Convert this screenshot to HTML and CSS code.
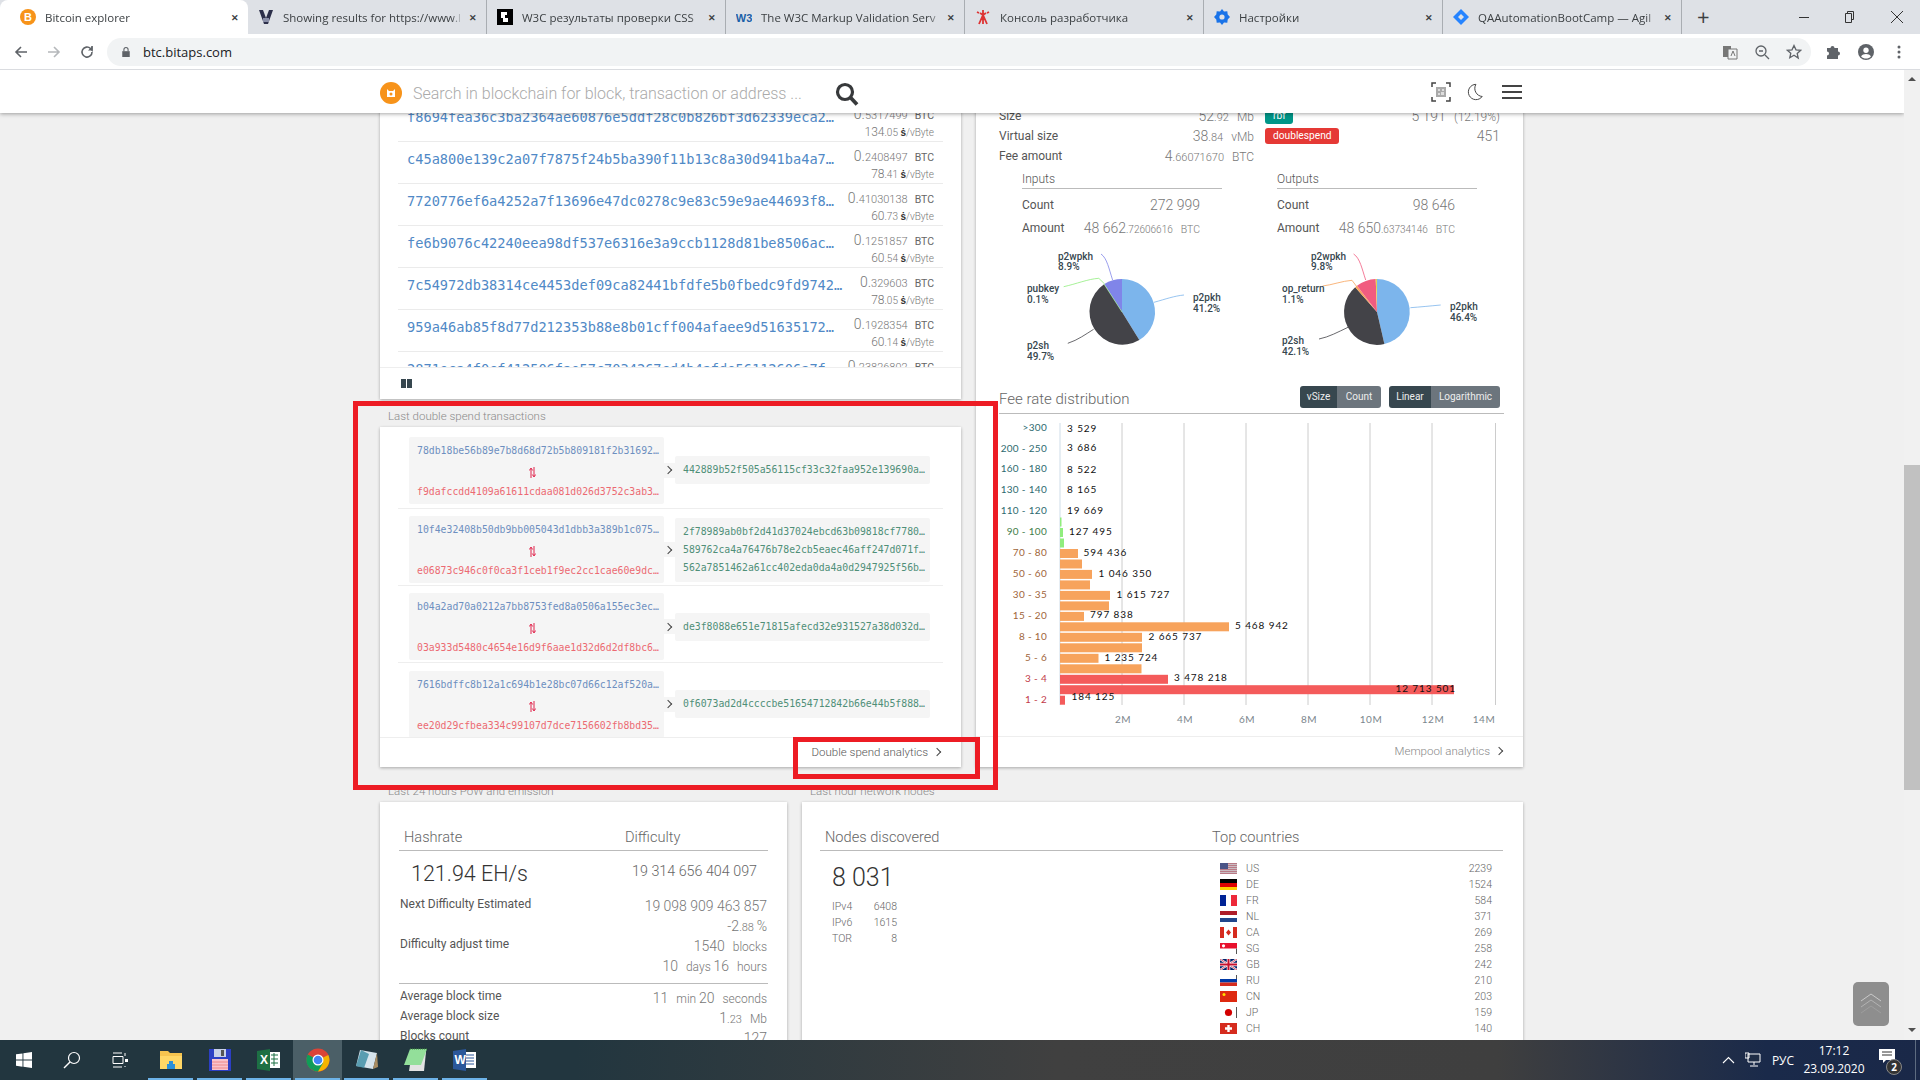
FILE: index.html
```html
<!DOCTYPE html>
<html lang="en">
<head>
    <meta charset="UTF-8">
    <meta name="viewport" content="width=device-width, initial-scale=1.0">
    <title>Bitcoin explorer</title>
    <link rel="stylesheet" href="styles.css">
</head>
<body>
    <!-- browser tabs -->
    <div class="tabs">
        <div class="tab active">
            <svg class="fav" viewBox="0 0 16 16"><circle cx="8" cy="8" r="8" fill="#f7931a"/><text x="8" y="12" class="fav-b">B</text></svg>
            <span class="tab-title">Bitcoin explorer</span><span class="tab-x">✕</span>
        </div>
        <div class="tab">
            <svg class="fav" viewBox="0 0 16 16"><path d="M1 1l4 0 3 8 3-8 4 0-5 14-4 0z" fill="#2c2f4a"/><path d="M5 9h6v4H5z" fill="#8a8fa8"/></svg>
            <span class="tab-title">Showing results for https://www.l</span><span class="tab-x">✕</span>
        </div>
        <div class="tab">
            <svg class="fav" viewBox="0 0 16 16"><path d="M0 0h16v16H0z" fill="#000"/><path d="M4 3h6v3H8v3h3v4H6V9H4z" fill="#fff"/></svg>
            <span class="tab-title">W3C результаты проверки CSS</span><span class="tab-x">✕</span>
        </div>
        <div class="tab">
            <svg class="fav" viewBox="0 0 16 16"><text x="8" y="13" class="fav-w3">W3</text></svg>
            <span class="tab-title">The W3C Markup Validation Serv</span><span class="tab-x">✕</span>
        </div>
        <div class="tab">
            <svg class="fav" viewBox="0 0 16 16"><path d="M8 1v14M4 15l4-9 4 9M5 4l3 2 3-2M2 3l2 1M14 3l-2 1" stroke="#d33" stroke-width="1.8" fill="none"/></svg>
            <span class="tab-title">Консоль разработчика</span><span class="tab-x">✕</span>
        </div>
        <div class="tab">
            <svg class="fav" viewBox="0 0 16 16"><path d="M8 0l2 2.5 3.3-.3.4 3.3L16 8l-2.300 2.500-.4 3.300-3.300-.3L8 16l-2-2.500-3.300.3-.4-3.300L0 8l2.300-2.500.4-3.300 3.300.3z" fill="#1a73e8"/><circle cx="8" cy="8" r="2.600" fill="#dee1e6"/></svg>
            <span class="tab-title">Настройки</span><span class="tab-x">✕</span>
        </div>
        <div class="tab">
            <svg class="fav" viewBox="0 0 16 16"><path d="M8 0l8 8-8 8-8-8z" fill="#2684ff"/><path d="M8 5l3 3-3 3-3-3z" fill="#dee1e6"/></svg>
            <span class="tab-title">QAAutomationBootCamp — Agil</span><span class="tab-x">✕</span>
        </div>
        <span class="new-tab">+</span>
        <div class="win-ctrl">
            <svg width="12" height="12" viewBox="0 0 12 12"><path d="M1 6.500h10" stroke="#333"/></svg>
            <svg width="12" height="12" viewBox="0 0 12 12"><path d="M3.500 2.500v-2h6v8h-2M1.500 2.500h6v9h-6z" stroke="#333" fill="none"/></svg>
            <svg width="14" height="14" viewBox="0 0 14 14"><path d="M1 1l12 12M13 1L1 13" stroke="#333"/></svg>
        </div>
    </div>

    <!-- address bar -->
    <div class="toolbar">
        <svg class="tool" viewBox="0 0 16 16"><path d="M14 8H3M8 3L3 8l5 5" stroke="#5f6368" stroke-width="1.600" fill="none"/></svg>
        <svg class="tool" viewBox="0 0 16 16"><path d="M2 8h11M8 3l5 5-5 5" stroke="#b5b8bb" stroke-width="1.600" fill="none"/></svg>
        <svg class="tool" viewBox="0 0 16 16"><path d="M13 8a5 5 0 1 1-1.500-3.500L13 6V2" stroke="#5f6368" stroke-width="1.600" fill="none"/><path d="M13.500 2v4.500H9z" fill="#5f6368"/></svg>
        <div class="omnibox">
            <svg class="lock" viewBox="0 0 12 14"><path d="M1.500 6h9v7h-9z" fill="#5f6368"/><path d="M3.500 6V4a2.500 2.500 0 0 1 5 0v2" stroke="#5f6368" stroke-width="1.300" fill="none"/></svg>
            <span class="url">btc.bitaps.com</span>
            <svg class="omni-icon" viewBox="0 0 16 16"><path d="M1 2h8v11H1z" fill="#777"/><path d="M6 5h9v10H6z" fill="#f1f3f4" stroke="#777"/><path d="M9 12l2-5 2 5" stroke="#777" fill="none"/></svg>
            <svg class="omni-icon" viewBox="0 0 16 16"><circle cx="7" cy="7" r="5" stroke="#5f6368" stroke-width="1.300" fill="none"/><path d="M11 11l4 4M5 7h4" stroke="#5f6368" stroke-width="1.300"/></svg>
            <svg class="omni-icon" viewBox="0 0 16 16"><path d="M8 1.500l2 4.300 4.700.5-3.500 3.200 1 4.600L8 11.300l-4.200 2.500 1-4.600L1.300 6.300 6 5.800z" stroke="#5f6368" stroke-width="1.300" fill="none"/></svg>
        </div>
        <svg class="tool ext" viewBox="0 0 16 16"><path d="M2 4h3.500a2 2 0 0 1 4 0H13v3.500a2 2 0 0 1 0 4V15H2v-3.500a2 2 0 0 0 0-4z" fill="#5f6368"/></svg>
        <svg class="tool" viewBox="0 0 18 18"><circle cx="9" cy="9" r="9" fill="#5f6368"/><circle cx="9" cy="7" r="3" fill="#fff"/><path d="M3.500 14c2-3.500 9-3.500 11 0-3 3-8 3-11 0z" fill="#fff"/></svg>
        <svg class="tool" viewBox="0 0 16 16"><circle cx="8" cy="3" r="1.500" fill="#5f6368"/><circle cx="8" cy="8" r="1.500" fill="#5f6368"/><circle cx="8" cy="13" r="1.500" fill="#5f6368"/></svg>
    </div>

    <div class="view">
        <div class="viewport">
            <!-- site header sits over the scrolled page -->
            <header class="site-head">
                <div class="search">
                    <svg class="logo" viewBox="0 0 22 22"><circle cx="11" cy="11" r="11" fill="#f7931a"/><path d="M7 7l2 2h4l2-2v8H7z" fill="#fff"/><circle cx="11" cy="12" r="1.500" fill="#f7931a"/></svg>
                    <span class="placeholder">Search in blockchain for block, transaction or address ...</span>
                    <svg class="search-icon" viewBox="0 0 24 24"><circle cx="10" cy="10" r="7.500" stroke="#37393b" stroke-width="3.200" fill="none"/><path d="M15.500 15.500L22 22.500" stroke="#37393b" stroke-width="3.800"/></svg>
                </div>
                <div class="head-icons">
                    <svg class="qr" viewBox="0 0 20 20"><path d="M1 5V1h4M15 1h4v4M19 15v4h-4M5 19H1v-4" stroke="#444" stroke-width="1.500" fill="none"/><path d="M5 5h10v10H5z" fill="#aaa"/><path d="M7 7h2v2H7zM11 7h2v2h-2zM7 11h2v2H7zM10 10h3v3h-3z" fill="#ddd"/></svg>
                    <svg class="moon" viewBox="0 0 20 20"><path d="M11 1.500A8.500 8.500 0 1 0 18 15 9 9 0 0 1 11 1.500z" stroke="#444" stroke-width="1.100" fill="none"/></svg>
                    <div class="burger"><i></i><i></i><i></i></div>
                </div>
            </header>

            <main class="page">
                <div class="top-grid">
                    <div class="left-col">
                        <section class="card tx-card">
                            <div class="tx-list">
                                <div class="tx-row">
                                    <a class="tx-hash">f8694fea36c3ba2364ae60876e5ddf28c0b826bf3d62339eca2…</a>
                                    <div class="tx-amount">
                                        <div><b>0.</b>5317499<span class="unit">BTC</span></div>
                                        <div class="fee"><b>134</b>.05 <i>ṡ</i>/vByte</div>
                                    </div>
                                </div>
                                <div class="tx-row">
                                    <a class="tx-hash">c45a800e139c2a07f7875f24b5ba390f11b13c8a30d941ba4a7…</a>
                                    <div class="tx-amount">
                                        <div><b>0.</b>2408497<span class="unit">BTC</span></div>
                                        <div class="fee"><b>78</b>.41 <i>ṡ</i>/vByte</div>
                                    </div>
                                </div>
                                <div class="tx-row">
                                    <a class="tx-hash">7720776ef6a4252a7f13696e47dc0278c9e83c59e9ae44693f8…</a>
                                    <div class="tx-amount">
                                        <div><b>0.</b>41030138<span class="unit">BTC</span></div>
                                        <div class="fee"><b>60</b>.73 <i>ṡ</i>/vByte</div>
                                    </div>
                                </div>
                                <div class="tx-row">
                                    <a class="tx-hash">fe6b9076c42240eea98df537e6316e3a9ccb1128d81be8506ac…</a>
                                    <div class="tx-amount">
                                        <div><b>0.</b>1251857<span class="unit">BTC</span></div>
                                        <div class="fee"><b>60</b>.54 <i>ṡ</i>/vByte</div>
                                    </div>
                                </div>
                                <div class="tx-row">
                                    <a class="tx-hash">7c54972db38314ce4453def09ca82441bfdfe5b0fbedc9fd9742…</a>
                                    <div class="tx-amount">
                                        <div><b>0.</b>329603<span class="unit">BTC</span></div>
                                        <div class="fee"><b>78</b>.05 <i>ṡ</i>/vByte</div>
                                    </div>
                                </div>
                                <div class="tx-row">
                                    <a class="tx-hash">959a46ab85f8d77d212353b88e8b01cff004afaee9d51635172…</a>
                                    <div class="tx-amount">
                                        <div><b>0.</b>1928354<span class="unit">BTC</span></div>
                                        <div class="fee"><b>60</b>.14 <i>ṡ</i>/vByte</div>
                                    </div>
                                </div>
                                <div class="tx-row">
                                    <a class="tx-hash">2871eca4f0cf412506fae57c7034267cd4b4afde56112606a7f</a>
                                    <div class="tx-amount">
                                        <div><b>0.</b>23826892<span class="unit">BTC</span></div>
                                        <div class="fee"><b>60</b>.11 <i>ṡ</i>/vByte</div>
                                    </div>
                                </div>
                            </div>
                            <div class="tx-foot"><span class="pause"><i></i><i></i></span></div>
                        </section>

                        <div class="section-label">Last double spend transactions</div>
                        <section class="card ds-card">
                            <div class="ds-row">
                                <div class="ds-in">
                                    <div class="h-blue">78db18be56b89e7b8d68d72b5b809181f2b31692…</div>
                                    <svg class="swap" viewBox="0 0 7 11"><path d="M2 11V2M.3 3.500L2 1l1.700 2.500M5 0v9M3.300 7.500L5 10l1.700-2.500" stroke="#e0224a" fill="none"/></svg>
                                    <div class="h-red">f9dafccdd4109a61611cdaa081d026d3752c3ab3…</div>
                                </div>
                                <div class="ds-chev"><span class="chev"></span></div>
                                <div class="ds-out">
                                    <div class="h-green">442889b52f505a56115cf33c32faa952e139690a…</div>
                                </div>
                            </div>
                            <div class="ds-row">
                                <div class="ds-in">
                                    <div class="h-blue">10f4e32408b50db9bb005043d1dbb3a389b1c075…</div>
                                    <svg class="swap" viewBox="0 0 7 11"><path d="M2 11V2M.3 3.500L2 1l1.700 2.500M5 0v9M3.300 7.500L5 10l1.700-2.500" stroke="#e0224a" fill="none"/></svg>
                                    <div class="h-red">e06873c946c0f0ca3f1ceb1f9ec2cc1cae60e9dc…</div>
                                </div>
                                <div class="ds-chev"><span class="chev"></span></div>
                                <div class="ds-out">
                                    <div class="h-green">2f78989ab0bf2d41d37024ebcd63b09818cf7780…</div>
                                    <div class="h-green">589762ca4a76476b78e2cb5eaec46aff247d071f…</div>
                                    <div class="h-green">562a7851462a61cc402eda0da4a0d2947925f56b…</div>
                                </div>
                            </div>
                            <div class="ds-row">
                                <div class="ds-in">
                                    <div class="h-blue">b04a2ad70a0212a7bb8753fed8a0506a155ec3ec…</div>
                                    <svg class="swap" viewBox="0 0 7 11"><path d="M2 11V2M.3 3.500L2 1l1.700 2.500M5 0v9M3.300 7.500L5 10l1.700-2.500" stroke="#e0224a" fill="none"/></svg>
                                    <div class="h-red">03a933d5480c4654e16d9f6aae1d32d6d2df8bc6…</div>
                                </div>
                                <div class="ds-chev"><span class="chev"></span></div>
                                <div class="ds-out">
                                    <div class="h-green">de3f8088e651e71815afecd32e931527a38d032d…</div>
                                </div>
                            </div>
                            <div class="ds-row">
                                <div class="ds-in">
                                    <div class="h-blue">7616bdffc8b12a1c694b1e28bc07d66c12af520a…</div>
                                    <svg class="swap" viewBox="0 0 7 11"><path d="M2 11V2M.3 3.500L2 1l1.700 2.500M5 0v9M3.300 7.500L5 10l1.700-2.500" stroke="#e0224a" fill="none"/></svg>
                                    <div class="h-red">ee20d29cfbea334c99107d7dce7156602fb8bd35…</div>
                                </div>
                                <div class="ds-chev"><span class="chev"></span></div>
                                <div class="ds-out">
                                    <div class="h-green">0f6073ad2d4ccccbe51654712842b66e44b5f888…</div>
                                </div>
                            </div>
                            <div class="card-foot"><a>Double spend analytics</a><span class="chev"></span></div>
                        </section>
                    </div>

                    <section class="card mempool-card">
                        <div class="mp-summary">
                            <div class="mp-col">
                                <div class="mp-row"><span>Size</span><span class="val"><b>52</b>.92<small>Mb</small></span></div>
                                <div class="mp-row"><span>Virtual size</span><span class="val"><b>38</b>.84<small>vMb</small></span></div>
                                <div class="mp-row"><span>Fee amount</span><span class="val"><b>4</b>.66071670<small>BTC</small></span></div>
                            </div>
                            <div class="mp-col right">
                                <div class="mp-row"><span class="badge teal">rbf</span><span class="val"><b>5 191</b><small>(12.19%)</small></span></div>
                                <div class="mp-row"><span class="badge red">doublespend</span><span class="val"><b>451</b></span></div>
                            </div>
                        </div>

                        <div class="io-grid">
                            <div class="io-col">
                                <div class="io-head">Inputs</div>
                                <div class="io-row"><span>Count</span><span class="val"><b>272 999</b></span></div>
                                <div class="io-row"><span>Amount</span><span class="val"><b>48 662</b>.72606616<small>BTC</small></span></div>
                            </div>
                            <div class="io-col">
                                <div class="io-head">Outputs</div>
                                <div class="io-row"><span>Count</span><span class="val"><b>98 646</b></span></div>
                                <div class="io-row"><span>Amount</span><span class="val"><b>48 650</b>.63734146<small>BTC</small></span></div>
                            </div>
                        </div>

                        <svg class="pies" viewBox="0 1 547 135">
                            <!-- inputs -->
                            <path d="M146 76L146 43A33 33 0 0 1 163.300 104.100Z" fill="#7cb5ec"/>
                            <path d="M146 76L163.300 104.100A33 33 0 0 1 128.100 48.300Z" fill="#434348"/>
                            <path d="M146 76L128.300 48.100A33 33 0 0 1 146 43Z" fill="#8085e9"/>
                            <path d="M146 76L128.100 48.300" stroke="#90ed7d" stroke-width=".6"/>
                            <path d="M178 66.300C190 63 198 60 208 59" class="lead" stroke="#7cb5ec"/>
                            <path d="M91.800 107.300C102 104 110 98 117.600 93.300" class="lead" stroke="#434348"/>
                            <path d="M87.700 50.700C100 48 112 43 122.800 42.300L128.700 48" class="lead" stroke="#90ed7d"/>
                            <path d="M125 18C131 22 133 33 136.600 44" class="lead" stroke="#8085e9"/>
                            <text class="pie-label" x="217" y="61">p2pkh</text><text class="pie-label" x="217" y="72">41.2%</text>
                            <text class="pie-label" x="82" y="20">p2wpkh</text><text class="pie-label" x="82" y="30">8.9%</text>
                            <text class="pie-label" x="51" y="52">pubkey</text><text class="pie-label" x="51" y="63">0.1%</text>
                            <text class="pie-label" x="51" y="109">p2sh</text><text class="pie-label" x="51" y="120">49.7%</text>
                            <!-- outputs -->
                            <path d="M401 76L401 43A33 33 0 0 1 408.400 108.100Z" fill="#7cb5ec"/>
                            <path d="M401 76L408.400 108.100A33 33 0 0 1 379.200 51.200Z" fill="#434348"/>
                            <path d="M401 76L379.200 51.200A33 33 0 0 1 381 49.800Z" fill="#f7a35c"/>
                            <path d="M401 76L381 49.800A33 33 0 0 1 399.700 43Z" fill="#f15c80"/>
                            <path d="M401 76L399.700 43A33 33 0 0 1 401 43Z" fill="#e4d354"/>
                            <path d="M434.400 71.700C444 71 454 70 464.700 69" class="lead" stroke="#7cb5ec"/>
                            <path d="M343 103C353 101 362 96 372 91.300" class="lead" stroke="#434348"/>
                            <path d="M346.600 50C356 49 366 45 376 44.300L381 51" class="lead" stroke="#f7a35c"/>
                            <path d="M377.600 18C384 22 386 33 389.700 44" class="lead" stroke="#f15c80"/>
                            <text class="pie-label" x="474" y="70">p2pkh</text><text class="pie-label" x="474" y="81">46.4%</text>
                            <text class="pie-label" x="335" y="20">p2wpkh</text><text class="pie-label" x="335" y="30">9.8%</text>
                            <text class="pie-label" x="306" y="52">op_return</text><text class="pie-label" x="306" y="63">1.1%</text>
                            <text class="pie-label" x="306" y="104">p2sh</text><text class="pie-label" x="306" y="115">42.1%</text>
                        </svg>

                        <div class="fee-head">
                            <span class="fee-title">Fee rate distribution</span>
                            <div class="btn-group"><span class="btn on vsize">vSize</span><span class="btn count">Count</span></div>
                            <div class="btn-group"><span class="btn on linear">Linear</span><span class="btn log">Logarithmic</span></div>
                        </div>

                        <svg class="chart" viewBox="0 0 547 316">
                            <g class="grid">
                                <path d="M146 7V289M208 7V289M270 7V289M332 7V289M394 7V289M456 7V289M519.500 7V289"/>
                            </g>
                            <path d="M84 7V289" stroke="#cfdde8"/>
                            <g class="bars-green">
                                <rect x="84" y="101.500" width="1.500" height="9"/>
                                <rect x="84" y="112" width="3" height="9"/>
                                <rect x="84" y="122.500" width="4" height="9"/>
                            </g>
                            <g class="bars-orange">
                                <rect x="84" y="133" width="18" height="9"/>
                                <rect x="84" y="143.500" width="22" height="9"/>
                                <rect x="84" y="153.900" width="32" height="9"/>
                                <rect x="84" y="164.400" width="30" height="9"/>
                                <rect x="84" y="174.900" width="50" height="9"/>
                                <rect x="84" y="185.400" width="49" height="9"/>
                                <rect x="84" y="195.900" width="24" height="9"/>
                                <rect x="84" y="206.300" width="169" height="9"/>
                                <rect x="84" y="216.800" width="82" height="9"/>
                                <rect x="84" y="227.300" width="82" height="9"/>
                                <rect x="84" y="237.800" width="38.500" height="9"/>
                                <rect x="84" y="248.300" width="81.500" height="9"/>
                            </g>
                            <g class="bars-red">
                                <rect x="84" y="258.800" width="108" height="9"/>
                                <rect x="84" y="269.200" width="394" height="9"/>
                                <rect x="84" y="279.700" width="5" height="9"/>
                            </g>
                            <g class="range" transform="translate(0 -1)">
                                <text x="71" y="12" fill="#2d6a6f">&gt;300</text>
                                <text x="71" y="33" fill="#2d6a6f">200 - 250</text>
                                <text x="71" y="53" fill="#2d6a6f">160 - 180</text>
                                <text x="71" y="74" fill="#2d6a6f">130 - 140</text>
                                <text x="71" y="95" fill="#2d6a6f">110 - 120</text>
                                <text x="71" y="116" fill="#3f7d4a">90 - 100</text>
                                <text x="71" y="137" fill="#a0653a">70 - 80</text>
                                <text x="71" y="158" fill="#a0653a">50 - 60</text>
                                <text x="71" y="179" fill="#a0653a">30 - 35</text>
                                <text x="71" y="200" fill="#a0653a">15 - 20</text>
                                <text x="71" y="221" fill="#a0653a">8 - 10</text>
                                <text x="71" y="242" fill="#a0653a">5 - 6</text>
                                <text x="71" y="263" fill="#c23a4a">3 - 4</text>
                                <text x="71" y="284" fill="#c23a4a">1 - 2</text>
                            </g>
                            <g class="values" transform="translate(0 -1)">
                                <text x="91" y="12.500">3 529</text>
                                <text x="91" y="32">3 686</text>
                                <text x="91" y="53.500">8 522</text>
                                <text x="91" y="74">8 165</text>
                                <text x="91" y="95">19 669</text>
                                <text x="93" y="116">127 495</text>
                                <text x="107.500" y="137">594 436</text>
                                <text x="122.500" y="158">1 046 350</text>
                                <text x="140.500" y="179">1 615 727</text>
                                <text x="114" y="199">797 838</text>
                                <text x="259" y="210">5 468 942</text>
                                <text x="172.500" y="221">2 665 737</text>
                                <text x="128.500" y="242">1 235 724</text>
                                <text x="198" y="262">3 478 218</text>
                                <text x="419.500" y="273">12 713 501</text>
                                <text x="95.500" y="281">184 125</text>
                            </g>
                            <g class="axis">
                                <text x="147" y="303">2M</text>
                                <text x="209" y="303">4M</text>
                                <text x="271" y="303">6M</text>
                                <text x="333" y="303">8M</text>
                                <text x="395" y="303">10M</text>
                                <text x="457" y="303">12M</text>
                                <text x="508" y="303">14M</text>
                            </g>
                        </svg>
                        <div class="card-foot muted"><a>Mempool analytics</a><span class="chev"></span></div>
                    </section>
                </div>

                <div class="bottom-grid">
                    <div class="pow-col">
                        <div class="section-label">Last 24 hours PoW and emission</div>
                        <section class="card pow-card">
                            <div class="title-row">
                                <span class="title pow-t1">Hashrate</span>
                                <span class="title">Difficulty</span>
                            </div>
                            <div class="pow-top">
                                <span class="hashrate">121.94 EH/s</span>
                                <span class="difficulty">19 314 656 404 097</span>
                            </div>
                            <div class="stat"><span>Next Difficulty Estimated</span><span class="val"><b>19 098 909 463 857</b></span></div>
                            <div class="stat"><span></span><span class="val"><b>-2</b>.88 <b>%</b></span></div>
                            <div class="stat"><span>Difficulty adjust time</span><span class="val"><b>1540</b><small>blocks</small></span></div>
                            <div class="stat"><span></span><span class="val"><b>10</b><small>days</small> <b>16</b><small>hours</small></span></div>
                            <div class="pow-sep"></div>
                            <div class="stat"><span>Average block time</span><span class="val"><b>11</b><small>min</small> <b>20</b><small>seconds</small></span></div>
                            <div class="stat"><span>Average block size</span><span class="val"><b>1</b>.23<small>Mb</small></span></div>
                            <div class="stat"><span>Blocks count</span><span class="val"><b>127</b></span></div>
                        </section>
                    </div>
                    <div class="nodes-col">
                        <div class="section-label">Last hour network nodes</div>
                        <section class="card nodes-card">
                            <div class="title-row">
                                <span class="title nodes-t1">Nodes discovered</span>
                                <span class="title">Top countries</span>
                            </div>
                            <div class="nodes-body">
                                <div class="nodes-left">
                                    <div class="nodes-total">8 031</div>
                                    <div class="node-kind"><span>IPv4</span><span>6408</span></div>
                                    <div class="node-kind"><span>IPv6</span><span>1615</span></div>
                                    <div class="node-kind"><span>TOR</span><span>8</span></div>
                                </div>
                                <div class="countries">
                                    <div class="country">
                                        <svg class="flag" viewBox="0 0 17 11"><path d="M0 0h17v11H0z" fill="#c9bcc2"/><path d="M0 0h17v1H0zM0 2h17v1H0zM0 4h17v1H0zM0 6h17v1H0zM0 8h17v1H0zM0 10h17v1H0z" fill="#b97a86"/><path d="M0 0h8v6H0z" fill="#4a5487"/></svg>
                                        <span class="code">US</span><span>2239</span>
                                    </div>
                                    <div class="country">
                                        <svg class="flag" viewBox="0 0 17 11"><path d="M0 0h17v4H0z" fill="#000"/><path d="M0 4h17v4H0z" fill="#d00"/><path d="M0 8h17v3H0z" fill="#fc0"/></svg>
                                        <span class="code">DE</span><span>1524</span>
                                    </div>
                                    <div class="country">
                                        <svg class="flag" viewBox="0 0 17 11"><path d="M0 0h6v11H0z" fill="#002395"/><path d="M6 0h5v11H6z" fill="#fff"/><path d="M11 0h6v11h-6z" fill="#ed2939"/></svg>
                                        <span class="code">FR</span><span>584</span>
                                    </div>
                                    <div class="country">
                                        <svg class="flag" viewBox="0 0 17 11"><path d="M0 0h17v4H0z" fill="#ae1c28"/><path d="M0 4h17v3H0z" fill="#fff"/><path d="M0 7h17v4H0z" fill="#21468b"/></svg>
                                        <span class="code">NL</span><span>371</span>
                                    </div>
                                    <div class="country">
                                        <svg class="flag" viewBox="0 0 17 11"><path d="M0 0h4v11H0zM13 0h4v11h-4z" fill="#d52b1e"/><path d="M8.500 2.500l2.500 3-2.500 3-2.500-3z" fill="#d52b1e"/></svg>
                                        <span class="code">CA</span><span>269</span>
                                    </div>
                                    <div class="country">
                                        <svg class="flag" viewBox="0 0 17 11"><path d="M0 0h17v5.500H0z" fill="#e8112d"/><circle cx="3.500" cy="2.800" r="1.600" fill="#fff"/><path d="M16.500 5.500V11" stroke="#555"/></svg>
                                        <span class="code">SG</span><span>258</span>
                                    </div>
                                    <div class="country">
                                        <svg class="flag" viewBox="0 0 17 11"><path d="M0 0h17v11H0z" fill="#012169"/><path d="M0 0l17 11M17 0L0 11" stroke="#fff" stroke-width="2"/><path d="M0 0l17 11M17 0L0 11" stroke="#c8102e" stroke-width=".7"/><path d="M8.500 0v11M0 5.500h17" stroke="#fff" stroke-width="3.500"/><path d="M8.500 0v11M0 5.500h17" stroke="#c8102e" stroke-width="2"/></svg>
                                        <span class="code">GB</span><span>242</span>
                                    </div>
                                    <div class="country">
                                        <svg class="flag" viewBox="0 0 17 11"><path d="M0 0h17v4H0z" fill="#fff"/><path d="M0 4h17v3.500H0z" fill="#0039a6"/><path d="M0 7.500h17V11H0z" fill="#d52b1e"/><path d="M16.500 0v4" stroke="#555"/></svg>
                                        <span class="code">RU</span><span>210</span>
                                    </div>
                                    <div class="country">
                                        <svg class="flag" viewBox="0 0 17 11"><path d="M0 0h17v11H0z" fill="#de2910"/><circle cx="4" cy="3.500" r="1.500" fill="#ffde00"/></svg>
                                        <span class="code">CN</span><span>203</span>
                                    </div>
                                    <div class="country">
                                        <svg class="flag" viewBox="0 0 17 11"><circle cx="8.500" cy="5.500" r="3.600" fill="#d30000"/><path d="M16.500 0v11" stroke="#555"/></svg>
                                        <span class="code">JP</span><span>159</span>
                                    </div>
                                    <div class="country">
                                        <svg class="flag" viewBox="0 0 17 11"><path d="M0 0h17v11H0z" fill="#d52b1e"/><path d="M7.300 2h2.400v2.300H12v2.400H9.700V9H7.300V6.700H5V4.300h2.300z" fill="#fff"/></svg>
                                        <span class="code">CH</span><span>140</span>
                                    </div>
                                </div>
                            </div>
                        </section>
                    </div>
                </div>
            </main>

            <!-- back to top button -->
            <div class="to-top">
                <svg viewBox="0 0 24 22"><path d="M2 8l10-7 10 7" stroke="#c9c9c9" fill="none"/><path d="M2 14l10-7 10 7" stroke="#b2b2b2" fill="none"/><path d="M2 20l10-7 10 7" stroke="#9e9e9e" fill="none"/></svg>
            </div>
        </div>

        <div class="scrollbar">
            <span class="arrow up"></span>
            <div class="thumb"></div>
            <span class="arrow down"></span>
        </div>

        <!-- red annotation frames drawn on top of the screenshot -->
        <div class="mark mark-outer"></div>
        <div class="mark mark-inner"></div>
    </div>

    <!-- windows taskbar -->
    <footer class="taskbar">
        <div class="task-btn"><svg width="16" height="16" viewBox="0 0 16 16"><path d="M0 2.300l6.500-.9v6.200H0zM7.400 1.300L16 0v7.600H7.400zM0 8.500h6.500v6.200L0 13.800zM7.400 8.500H16V16l-8.600-1.200z" fill="#fff"/></svg></div>
        <div class="task-btn"><svg width="18" height="18" viewBox="0 0 18 18"><circle cx="11" cy="7" r="5.500" stroke="#fff" stroke-width="1.200" fill="none"/><path d="M7 11l-6 6" stroke="#fff" stroke-width="1.400"/></svg></div>
        <div class="task-btn"><svg width="16" height="16" viewBox="0 0 16 16"><path d="M1 4.500h10v7H1zM1 1h9M1 15h9M13 1v3M13 14v1" stroke="#fff" fill="none"/><path d="M13 7h3v3h-3z" fill="#fff"/></svg></div>
        <div class="task-btn pinned gap"><svg width="22" height="18" viewBox="0 0 22 18"><path d="M0 0h8l2 2h12v16H0z" fill="#f6c44f"/><path d="M0 5h22v13H0z" fill="#ffd766"/><path d="M7 18v-5h2v-3h4v3h2v5z" fill="#2b90d9"/></svg></div>
        <div class="task-btn pinned"><svg width="24" height="24" viewBox="0 0 24 24"><path d="M1 1h22v22H1z" fill="#2c3fc4"/><path d="M6 1h12v8H6z" fill="#c8d0e8"/><path d="M13 2h3v6h-3z" fill="#555"/><path d="M4 11h16v11H4z" fill="#f9c3cc"/><path d="M4 14h16M4 17h16M4 20h16" stroke="#e88"/></svg></div>
        <div class="task-btn pinned"><svg width="23" height="22" viewBox="0 0 23 22"><path d="M12 3h11v16H12z" fill="#fff"/><path d="M14 6h7M14 10h7M14 14h7M17 4v13" stroke="#1d7044"/><path d="M0 2l13-2v22L0 20z" fill="#1d7044"/><text x="3" y="15" class="tb-letter">X</text></svg></div>
        <div class="task-btn pinned active"><svg width="24" height="24" viewBox="0 0 24 24"><circle cx="12" cy="12" r="11.500" fill="#db4437"/><path d="M12 12L22.300 7A11.500 11.500 0 0 1 12 23.500z" fill="#f4b400"/><path d="M12 12L6.300 22A11.500 11.500 0 0 1 1.700 6.500z" fill="#0f9d58"/><path d="M12 23.500A11.500 11.500 0 0 1 6.300 22L12 12l5 3z" fill="#0f9d58"/><circle cx="12" cy="12" r="5.500" fill="#fff"/><circle cx="12" cy="12" r="4.300" fill="#4285f4"/></svg></div>
        <div class="task-btn pinned"><svg width="24" height="22" viewBox="0 0 24 22"><path d="M5 1l17 3-4 16L1 17z" fill="#d6e4ec"/><path d="M6 1l-5 16 8 2 5-14z" fill="#3a8ba3" opacity=".8"/><path d="M22 4l1 14-5 2z" fill="#a98d62"/></svg></div>
        <div class="task-btn pinned"><svg width="24" height="24" viewBox="0 0 24 24"><path d="M8 4h14l-2 19H5z" fill="#e3e3e3"/><path d="M6 1h17l-6 16H0z" fill="#93df9a"/><path d="M6 1h17" stroke="#3c8a3e" stroke-dasharray="1 1"/></svg></div>
        <div class="task-btn pinned"><svg width="23" height="22" viewBox="0 0 23 22"><path d="M10 3h13v16H10z" fill="#fff"/><path d="M13 6h8M13 9h8M13 12h8M13 15h8" stroke="#2b579a"/><path d="M0 2l13-2v22L0 20z" fill="#2b579a"/><text x="1.500" y="15" class="tb-letter">W</text></svg></div>
        <div class="tray">
            <svg width="13" height="8" viewBox="0 0 13 8"><path d="M1 7l5.500-5.500L12 7" stroke="#fff" stroke-width="1.100" fill="none"/></svg>
            <svg class="net" width="16" height="16" viewBox="0 0 16 16"><path d="M3 2h12v8H3zM9 10v3M5 14h8M0 1h4v5H0z" stroke="#fff" fill="#1f2d46"/></svg>
            <span class="lang">РУС</span>
            <div class="clock"><div>17:12</div><div>23.09.2020</div></div>
            <div class="notify">
                <svg width="17" height="16" viewBox="0 0 17 16"><path d="M0 0h16v11H7l-3 3v-3H0z" fill="#fff"/><path d="M3 3h10M3 6h10" stroke="#333"/></svg>
                <span class="notify-count">2</span>
            </div>
            <span class="show-desktop"></span>
        </div>
    </footer>
</body>
</html>
```
FILE: styles.css
```css
* {
    box-sizing: border-box;
}

html, body {
    height: 100%;
    margin: 0;
    overflow: hidden;
}

body {
    display: flex;
    flex-direction: column;
    font-family: Roboto, Arial, sans-serif;
    background: #f0f0f0;
    color: #555;
}

/* browser chrome */
.tabs {
    height: 34px;
    background: #dee1e6;
    display: flex;
    padding-left: 8px;
    font-family: "Open Sans", Arial, sans-serif;
    font-size: 11.5px;
    color: #3c4043;
    flex-shrink: 0;
}

.tab {
    width: 239px;
    height: 34px;
    display: flex;
    align-items: center;
    padding: 0 9px 0 10px;
    position: relative;
    border-right: 1px solid #a9adb2;
    background-clip: content-box;
}

.tab.active {
    background: #fff;
    border-right: none;
    border-radius: 8px 8px 0 0;
    margin-left: -8px;
    width: 248px;
    padding-left: 20px;
}

.fav {
    width: 16px;
    height: 16px;
    flex-shrink: 0;
    margin-right: 9px;
}

.fav-b {
    font: bold 11px "Liberation Sans", sans-serif;
    fill: #fff;
    text-anchor: middle;
}

.fav-w3 {
    font: bold 11px "Liberation Sans", sans-serif;
    fill: #1a5fa8;
    text-anchor: middle;
}

.tab-title {
    flex: 1;
    overflow: hidden;
    white-space: nowrap;
    mask-image: linear-gradient(to left, transparent, #000 12px);
}

.tab-x {
    font-size: 9px;
    font-weight: bold;
    margin-left: 6px;
    color: #3c4043;
}

.new-tab {
    font-size: 22px;
    line-height: 32px;
    margin-left: 15px;
    color: #3c4043;
}

.win-ctrl {
    margin-left: auto;
    width: 122px;
    padding-right: 16px;
    display: flex;
    align-items: center;
    justify-content: space-between;
}

.toolbar {
    height: 36px;
    background: #fff;
    display: flex;
    align-items: center;
    padding: 0 13px;
    gap: 17px;
    border-bottom: 1px solid #dadce0;
    flex-shrink: 0;
}

.tool {
    width: 16px;
    height: 16px;
    flex-shrink: 0;
}

.omnibox {
    flex: none;
    width: 1704px;
    height: 28px;
    margin-left: -5px;
    margin-right: -3px;
    background: #f1f3f4;
    border-radius: 14px;
    display: flex;
    align-items: center;
    padding: 0 9px 0 14px;
    font-family: "Open Sans", Arial, sans-serif;
    font-size: 13px;
    color: #202124;
}

.lock {
    width: 10px;
    height: 12px;
    margin-right: 12px;
}

.url {
    flex: 1;
}

.omni-icon {
    width: 16px;
    height: 16px;
    margin-left: 16px;
}

.view {
    flex: 1;
    display: flex;
    position: relative;
    overflow: hidden;
    min-height: 0;
}

.viewport {
    flex: 1;
    position: relative;
    overflow: hidden;
}

.scrollbar {
    width: 16px;
    background: #f1f1f1;
    display: flex;
    flex-direction: column;
    align-items: center;
    flex-shrink: 0;
}

.arrow {
    width: 0;
    height: 0;
    border-left: 4px solid transparent;
    border-right: 4px solid transparent;
}

.arrow.up {
    margin-top: 7px;
    border-bottom: 4px solid #505050;
}

.arrow.down {
    margin-top: 238px;
    border-top: 4px solid #505050;
}

.thumb {
    width: 16px;
    height: 325px;
    margin-top: 384px;
    background: #c1c1c1;
}

.mark {
    position: absolute;
    border: 5px solid #ed1c24;
    pointer-events: none;
}

.mark-outer {
    left: 353px;
    top: 331px;
    width: 645px;
    height: 389px;
}

.mark-inner {
    left: 793px;
    top: 667px;
    width: 187px;
    height: 42px;
}

/* site header */
.site-head {
    position: absolute;
    z-index: 2;
    top: 0;
    left: 0;
    right: 0;
    height: 43px;
    background: #fff;
    box-shadow: 0 1px 4px rgba(0, 0, 0, 0.35);
    display: flex;
    align-items: center;
    padding-left: 380px;
}

.search {
    display: flex;
    align-items: center;
    width: 480px;
    margin-top: 3px;
}

.logo {
    width: 22px;
    height: 22px;
    margin-right: 11px;
    flex-shrink: 0;
}

.placeholder {
    font-size: 16px;
    font-weight: 300;
    color: #aaa;
    white-space: nowrap;
    width: 422px;
}

.search-icon {
    width: 24px;
    height: 24px;
    margin-top: 1px;
    flex-shrink: 0;
}

.head-icons {
    margin-left: 571px;
    display: flex;
    align-items: center;
    gap: 15px;
}

.qr {
    width: 20px;
    height: 20px;
}

.moon {
    width: 18px;
    height: 18px;
}

.burger {
    width: 20px;
    display: flex;
    flex-direction: column;
    gap: 4px;
    margin-left: 3px;
}

.burger i {
    height: 2px;
    background: #444;
}

/* page */
.page {
    padding: 30px 0 0 380px;
    width: 1523px;
}

.top-grid {
    display: flex;
    gap: 15px;
}

.left-col {
    width: 581px;
    flex-shrink: 0;
}

.card {
    background: #fff;
    box-shadow: 0 1px 3px rgba(0, 0, 0, 0.3);
}

.section-label {
    font-size: 11.5px;
    font-weight: 300;
    color: #8a8a8a;
    padding-left: 8px;
    height: 28px;
    line-height: 35px;
}

.val {
    font-weight: 300;
    color: #666;
    white-space: nowrap;
}

.val small {
    margin-left: 8px;
    font-size: 12px;
}

.chev {
    display: inline-block;
    width: 6px;
    height: 6px;
    border-top: 1px solid #444;
    border-right: 1px solid #444;
    transform: rotate(45deg);
}

.card-foot {
    height: 31px;
    border-top: 1px solid #eee;
    display: flex;
    align-items: center;
    justify-content: flex-end;
    gap: 6px;
    padding: 0 21px 2px 0;
    font-size: 11.5px;
    font-weight: 300;
    color: #555;
}

.card-foot.muted {
    margin-top: auto;
    color: #888;
}

/* latest transactions */
.tx-list {
    height: 268px;
    overflow: hidden;
    border-bottom: 1px solid #eee;
    padding: 0 18px;
}

.tx-row {
    height: 42px;
    border-bottom: 1px solid #ebebeb;
    display: flex;
    justify-content: space-between;
    padding: 7px 9px 0 9px;
    overflow: hidden;
}

.tx-hash {
    font-family: "DejaVu Sans Mono", monospace;
    font-size: 13.65px;
    line-height: 20px;
    color: #5089c6;
    white-space: nowrap;
}

.tx-amount {
    text-align: right;
    font-size: 11px;
    line-height: 16px;
    font-weight: 300;
    color: #777;
    white-space: nowrap;
    margin-top: -1px;
}

.tx-amount b {
    font-size: 14px;
    font-weight: 300;
}

.unit {
    font-weight: 400;
    font-size: 10.5px;
    margin-left: 7px;
    color: #666;
}

.fee {
    font-size: 10px;
}

.fee b {
    font-size: 12px;
}

.fee i {
    font-style: normal;
    font-weight: 700;
    color: #333;
}

.tx-foot {
    height: 31px;
    display: flex;
    align-items: center;
    padding-left: 21px;
}

.pause {
    display: flex;
    gap: 1px;
}

.pause i {
    width: 5px;
    height: 9px;
    background: #37474f;
}

/* double spends */
.ds-card {
    display: flex;
    flex-direction: column;
    height: 340px;
}

.ds-row {
    margin: 0 18px;
    padding: 10px 12px 5px 11px;
    height: 77px;
    display: flex;
    align-items: center;
    border-bottom: 1px solid #eee;
    font-family: "DejaVu Sans Mono", monospace;
    font-size: 9.8px;
    white-space: nowrap;
}

.ds-row:first-child {
    height: 82px;
}

.ds-row:nth-child(4) {
    border-bottom: none;
    height: 74px;
    padding-bottom: 2px;
}

.ds-in {
    width: 255px;
    height: 67px;
    background: #f5f5f5;
    border-radius: 2px;
    padding: 8px 8px 7px;
    display: flex;
    flex-direction: column;
    justify-content: space-between;
}

.h-blue {
    color: #6d8fc0;
}

.h-red {
    color: #ec6a72;
}

.h-green {
    color: #4f8f78;
    line-height: 18px;
}

.swap {
    width: 7px;
    height: 11px;
    align-self: center;
    margin: 3px 0 0 -9px;
    flex-shrink: 0;
}

.ds-chev {
    width: 11px;
    height: 15px;
    background: #f5f5f5;
    display: flex;
    align-items: center;
    justify-content: center;
    flex-shrink: 0;
}

.ds-chev .chev {
    margin-left: -3px;
}

.ds-out {
    width: 255px;
    background: #f5f5f5;
    border-radius: 2px;
    padding: 5px 8px;
}

/* mempool */
.mempool-card {
    width: 547px;
    height: 667px;
    flex-shrink: 0;
    display: flex;
    flex-direction: column;
}

.mp-summary {
    display: flex;
    padding: 6px 23px 0 23px;
    height: 66px;
    font-size: 12px;
}

.mp-col {
    width: 255px;
}

.mp-col.right {
    margin-left: 11px;
    width: 235px;
}

.mp-row {
    height: 20px;
    display: flex;
    align-items: center;
    justify-content: space-between;
}

.mp-row .val {
    font-size: 11px;
    color: #777;
}

.mp-row .val b, .io-row .val b {
    font-size: 14px;
    font-weight: 300;
}

.badge {
    color: #fff;
    font-size: 10.2px;
    line-height: 16px;
    padding: 0 7px 0 8px;
    border-radius: 3px;
}

.badge.teal {
    background: #009688;
}

.badge.red {
    background: #e53935;
}

.io-grid {
    display: flex;
    gap: 55px;
    padding: 4px 0 0 46px;
    font-size: 12px;
}

.io-col {
    width: 200px;
}

.io-head {
    height: 19px;
    line-height: 18px;
    border-bottom: 1px solid #bbb;
    margin-bottom: 7px;
    font-weight: 300;
    color: #555;
}

.io-row {
    height: 18px;
    margin-bottom: 5px;
    display: flex;
    align-items: center;
    justify-content: space-between;
    padding-right: 22px;
}

.io-row .val {
    font-size: 10px;
    color: #777;
}

.io-row .val small {
    font-size: 10.5px;
}

.pies {
    width: 547px;
    height: 135px;
    display: block;
    margin-top: -5px;
    flex-shrink: 0;
}

.lead {
    fill: none;
    stroke-width: 0.8;
}

.pie-label {
    font: 500 10px Roboto, Arial, sans-serif;
    fill: #37474f;
    dominant-baseline: central;
}

.fee-head {
    margin: 14px 19px 0 23px;
    height: 28px;
    border-bottom: 1px solid #bbb;
    display: flex;
    gap: 8px;
}

.fee-title {
    flex: 1;
    font-size: 15px;
    font-weight: 300;
    color: #666;
    line-height: 26px;
}

.btn-group {
    display: flex;
    height: 22px;
    border-radius: 3px;
    overflow: hidden;
    font-size: 10px;
    color: #eee;
}

.btn-group:last-child {
    margin-right: 4px;
}

.btn {
    background: #6c757d;
    line-height: 22px;
    text-align: center;
}

.btn.on {
    background: #37474f;
}

.vsize {
    width: 37px;
}

.count {
    width: 44px;
}

.linear {
    width: 42px;
}

.log {
    width: 69px;
}

.chart {
    width: 547px;
    height: 316px;
    display: block;
    margin-top: 2px;
    flex-shrink: 0;
}

.grid {
    stroke: #ccc;
    fill: none;
}

.bars-green rect {
    fill: #90ed7d;
}

.bars-orange rect {
    fill: #f7a35c;
}

.bars-red rect {
    fill: #f45b5b;
}

.range text {
    font: 10px Lato, Arial, sans-serif;
    letter-spacing: 0.3px;
    text-anchor: end;
    dominant-baseline: central;
}

.values text {
    font: 10px Lato, Arial, sans-serif;
    letter-spacing: 0.9px;
    fill: #111;
    dominant-baseline: central;
}

.axis text {
    font: 10px Lato, Arial, sans-serif;
    letter-spacing: 0.5px;
    fill: #7b868d;
    text-anchor: middle;
    dominant-baseline: central;
}

/* bottom cards */
.bottom-grid {
    display: flex;
    gap: 15px;
}

.pow-col {
    width: 407px;
}

.nodes-col {
    width: 721px;
}

.bottom-grid .section-label {
    height: 35px;
    line-height: 48px;
}

.pow-card {
    height: 300px;
    padding: 24px 19px 0;
    font-size: 12px;
}

.nodes-card {
    height: 300px;
    padding: 24px 20px 0 18px;
}

.title-row {
    display: flex;
    height: 25px;
    border-bottom: 1px solid #bbb;
}

.title {
    font-size: 14.6px;
    font-weight: 300;
    color: #666;
    line-height: 22px;
    white-space: nowrap;
}

.pow-t1 {
    width: 226px;
    padding-left: 5px;
}

.nodes-t1 {
    width: 392px;
    padding-left: 5px;
}

.pow-top {
    height: 45px;
    display: flex;
    justify-content: space-between;
    padding: 0 11px 0 12px;
    font-weight: 300;
}

.hashrate {
    font-size: 21.5px;
    line-height: 46px;
    color: #333;
}

.difficulty {
    font-size: 14.3px;
    line-height: 40px;
    color: #666;
}

.stat {
    height: 20px;
    display: flex;
    justify-content: space-between;
    line-height: 16px;
    color: #555;
    padding: 0 1px;
}

.stat .val {
    line-height: 20px;
    font-size: 11px;
    color: #777;
}

.stat .val b {
    font-size: 14px;
    font-weight: 300;
}

.pow-sep {
    height: 11px;
    border-bottom: 1px solid #bbb;
    margin-top: -3px;
    margin-bottom: 4px;
}

.nodes-body {
    display: flex;
}

.nodes-left {
    width: 392px;
    padding: 10px 0 0 12px;
}

.nodes-total {
    font-size: 25px;
    font-weight: 300;
    color: #333;
    line-height: 34px;
    margin-bottom: 4px;
}

.node-kind {
    width: 65px;
    height: 16px;
    display: flex;
    justify-content: space-between;
    font-size: 10.5px;
    line-height: 16px;
    font-weight: 300;
    color: #666;
}

.countries {
    flex: 1;
    padding: 9px 11px 0 8px;
}

.country {
    height: 16px;
    display: flex;
    align-items: center;
    font-size: 10.5px;
    font-weight: 300;
    color: #666;
}

.flag {
    width: 17px;
    height: 11px;
    flex-shrink: 0;
}

.code {
    flex: 1;
    margin-left: 9px;
}

.to-top {
    position: absolute;
    right: 15px;
    bottom: 14px;
    width: 36px;
    height: 44px;
    background: #8e8e8e;
    border-radius: 5px;
    display: flex;
    align-items: center;
    justify-content: center;
}

.to-top svg {
    width: 24px;
    height: 22px;
}

/* taskbar */
.taskbar {
    height: 40px;
    flex-shrink: 0;
    display: flex;
    background: linear-gradient(to right, #22363f 0%, #22363f 30%, #404040 55%, #3f3f3f 78%, #1a2a4a 92%, #1a2848 100%);
    color: #fff;
    font-family: "Open Sans", Arial, sans-serif;
}

.task-btn {
    width: 48px;
    height: 40px;
    display: flex;
    align-items: center;
    justify-content: center;
    position: relative;
    flex-shrink: 0;
}

.task-btn.pinned {
    width: 49px;
}

.task-btn.gap {
    margin-left: 2px;
}

.task-btn.pinned::after {
    content: '';
    position: absolute;
    left: 2px;
    right: 2px;
    bottom: 0;
    height: 2px;
    background: #6db3e8;
}

.task-btn.active {
    background: #4b5f67;
}

.tb-letter {
    font: bold 12px "Liberation Sans", sans-serif;
    fill: #fff;
}

.tray {
    margin-left: auto;
    display: flex;
    align-items: center;
    font-size: 12px;
}

.net {
    margin-left: 10px;
}

.lang {
    margin-left: 2px;
    width: 40px;
    text-align: center;
}

.clock {
    width: 62px;
    text-align: center;
    line-height: 18px;
    white-space: nowrap;
}

.notify {
    position: relative;
    width: 45px;
    height: 40px;
    display: flex;
    align-items: center;
    justify-content: center;
    margin-right: 5px;
}

.notify svg {
    margin-top: -6px;
}

.notify-count {
    position: absolute;
    left: 21px;
    top: 19px;
    width: 16px;
    height: 16px;
    border-radius: 50%;
    background: #333;
    border: 1px solid #888;
    font-size: 10px;
    font-weight: bold;
    line-height: 14px;
    text-align: center;
}

.show-desktop {
    width: 5px;
    height: 40px;
    border-left: 1px solid #5d6b80;
}
```
